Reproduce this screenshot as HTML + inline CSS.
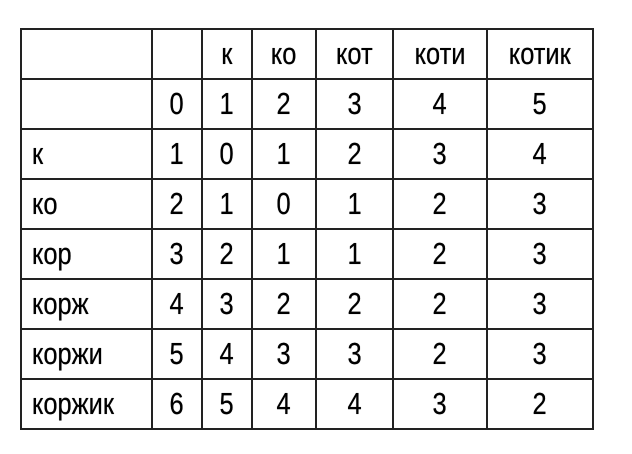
<!DOCTYPE html>
<html><head><meta charset="utf-8"><style>
body{margin:0;width:632px;height:454px;background:#fff;overflow:hidden;font-family:"Liberation Sans",Arial,sans-serif;}
table{position:absolute;left:20px;top:28px;border-collapse:collapse;}
td{border:2px solid #222;height:48px;padding:0;text-align:center;font-size:31px;color:#000;line-height:48px;}
td span{display:inline-block;transform:scaleX(0.82);text-shadow:0 0 0.6px #000;}
td.l{text-align:left;padding-left:10px;}
td.l span{transform-origin:left center;}
</style></head><body>
<table>
<colgroup><col style="width:131px"><col style="width:50px"><col style="width:50px"><col style="width:64px"><col style="width:77px"><col style="width:94px"><col style="width:106px"></colgroup>
<tr><td class="l"></td><td></td><td><span>к</span></td><td><span>ко</span></td><td><span>кот</span></td><td><span>коти</span></td><td><span>котик</span></td></tr>
<tr><td class="l"></td><td><span>0</span></td><td><span>1</span></td><td><span>2</span></td><td><span>3</span></td><td><span>4</span></td><td><span>5</span></td></tr>
<tr><td class="l"><span>к</span></td><td><span>1</span></td><td><span>0</span></td><td><span>1</span></td><td><span>2</span></td><td><span>3</span></td><td><span>4</span></td></tr>
<tr><td class="l"><span>ко</span></td><td><span>2</span></td><td><span>1</span></td><td><span>0</span></td><td><span>1</span></td><td><span>2</span></td><td><span>3</span></td></tr>
<tr><td class="l"><span>кор</span></td><td><span>3</span></td><td><span>2</span></td><td><span>1</span></td><td><span>1</span></td><td><span>2</span></td><td><span>3</span></td></tr>
<tr><td class="l"><span>корж</span></td><td><span>4</span></td><td><span>3</span></td><td><span>2</span></td><td><span>2</span></td><td><span>2</span></td><td><span>3</span></td></tr>
<tr><td class="l"><span>коржи</span></td><td><span>5</span></td><td><span>4</span></td><td><span>3</span></td><td><span>3</span></td><td><span>2</span></td><td><span>3</span></td></tr>
<tr><td class="l"><span>коржик</span></td><td><span>6</span></td><td><span>5</span></td><td><span>4</span></td><td><span>4</span></td><td><span>3</span></td><td><span>2</span></td></tr>
</table>
</body></html>
